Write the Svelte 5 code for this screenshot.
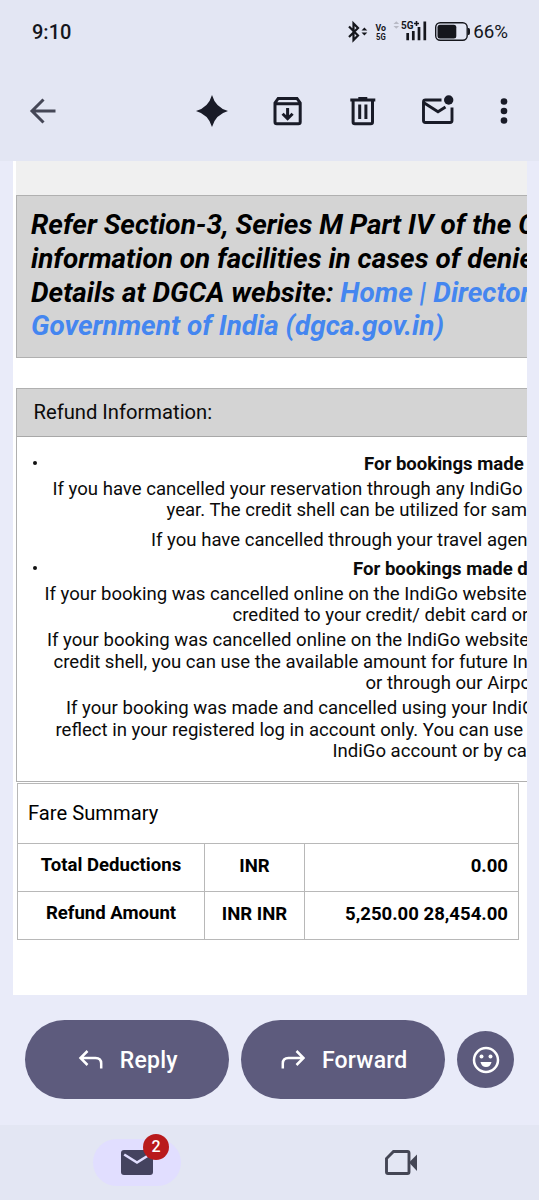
<script lang="ts">
  interface Line {
    text: string;
    indent: number;
  }

  interface Paragraph {
    lines: Line[];
    bullet?: boolean;
    spaced?: boolean;
  }

  const paragraphs: Paragraph[] = [
    { bullet: true, lines: [{ text: 'For bookings made', indent: 347 }] },
    {
      lines: [
        { text: 'If you have cancelled your reservation through any IndiGo', indent: 35.5 },
        { text: 'year. The credit shell can be utilized for sam', indent: 149.5 },
      ],
    },
    {
      spaced: true,
      lines: [{ text: 'If you have cancelled through your travel agen', indent: 134 }],
    },
    { bullet: true, lines: [{ text: 'For bookings made d', indent: 336 }] },
    {
      lines: [
        { text: 'If your booking was cancelled online on the IndiGo website', indent: 27.5 },
        { text: 'credited to your credit/ debit card or', indent: 215.5 },
      ],
    },
    {
      lines: [
        { text: 'If your booking was cancelled online on the IndiGo website', indent: 30 },
        { text: 'credit shell, you can use the available amount for future In', indent: 36.5 },
        { text: 'or through our Airpo', indent: 348.5 },
      ],
    },
    {
      lines: [
        { text: 'If your booking was made and cancelled using your IndiG', indent: 49 },
        { text: 'reflect in your registered log in account only. You can use', indent: 38.5 },
        { text: 'IndiGo account or by ca', indent: 315.5 },
      ],
    },
  ];

  const fares = [
    { label: 'Total Deductions', currency: 'INR', amount: '0.00' },
    { label: 'Refund Amount', currency: 'INR INR', amount: '5,250.00 28,454.00' },
  ];

  let unread = $state(2);
</script>

<div class="screen">
  <div class="status-bar">
    <span class="clock">9:10</span>
    <div class="indicators">
      <svg class="signals" width="126" height="24" viewBox="0 0 126 24">
        <path d="M5 6.5 14 15.500 9.500 20V3.500L14 8 5 17" fill="none" stroke="#15161c" stroke-width="2.2" />
        <path d="M17.500 10.500 20.400 7.500 23.300 10.500ZM17.500 12.500 20.400 15.500 23.300 12.500Z" fill="#15161c" />
        <text x="31.500" y="10.500" font-size="9.5" textLength="10.500" lengthAdjust="spacingAndGlyphs">Vo</text>
        <text x="32" y="20" font-size="9.5" textLength="9.700" lengthAdjust="spacingAndGlyphs">5G</text>
        <path d="M49.500 4 52.300 1.300 55.100 4ZM49.500 6 52.300 8.700 55.100 6Z" fill="#b7b9c4" />
        <text x="57" y="9" font-size="10" textLength="12.500" lengthAdjust="spacingAndGlyphs">5G</text>
        <path d="M72.500 1v5M70 3.500h5" stroke="#15161c" stroke-width="1.6" />
        <path d="M63.700 13v7.300M69.300 11v9.300M75 7v13.300M80.800 1.500v18.800" stroke="#15161c" stroke-width="2.7" />
        <rect x="91.700" y="2.800" width="31.500" height="17.500" rx="4.500" fill="none" stroke="#15161c" stroke-width="1.4" />
        <rect x="93.500" y="4.700" width="18.800" height="13.700" rx="2.500" fill="#15161c" />
        <path d="M124 8h.5q1.500 0 1.500 2v3q0 2-1.500 2h-.5Z" fill="#15161c" />
      </svg>
      <span class="battery">66%</span>
    </div>
  </div>

  <div class="toolbar">
    <button class="tool back" aria-label="Back">
      <svg width="40" height="40" viewBox="0 0 40 40">
        <path d="M32.500 20H9M20.500 8.500 9 20l11.500 11.500" fill="none" stroke="#454756" stroke-width="3" />
      </svg>
    </button>
    <div class="tools">
      <button class="tool" aria-label="Summarise">
        <svg width="40" height="40" viewBox="0 0 40 40">
          <path d="M20 4Q23.500 16.500 36 20 23.500 23.500 20 36 16.500 23.500 4 20 16.500 16.500 20 4Z" fill="#191b27" />
        </svg>
      </button>
      <button class="tool" aria-label="Archive">
        <svg width="40" height="40" viewBox="0 0 40 40">
          <path d="M7 12V31q0 1.800 1.800 1.800H30.400q1.800 0 1.800-1.800V12L29 7.500H10.200ZM7 12.800H32.200M19.600 17v10.500M14.600 22.700l5 5 5-5" fill="none" stroke="#191b27" stroke-width="3" />
        </svg>
      </button>
      <button class="tool" aria-label="Delete">
        <svg width="40" height="40" viewBox="0 0 40 40">
          <path d="M7.300 9H32.300M15.300 7.600h9M10.100 9V31q0 1.800 1.800 1.800H27.700q1.800 0 1.800-1.800V9M16.700 13.500v14.500M22.900 13.500v14.500" fill="none" stroke="#191b27" stroke-width="3" />
        </svg>
      </button>
      <button class="tool" aria-label="Mark as unread">
        <svg width="40" height="40" viewBox="0 0 40 40">
          <path d="M23.500 9H7.500Q5.500 9 5.500 11V29.500q0 2 2 2H32q2 0 2-2V16.500M5.500 11.500 20 20.700 27.500 16" fill="none" stroke="#191b27" stroke-width="2.9" />
          <circle cx="30.700" cy="9" r="4.700" fill="#191b27" />
        </svg>
      </button>
      <button class="tool more" aria-label="More options">
        <svg width="40" height="40" viewBox="0 0 40 40" fill="#191b27">
          <circle cx="20" cy="10.500" r="3.300" />
          <circle cx="20" cy="20" r="3.300" />
          <circle cx="20" cy="29.500" r="3.300" />
        </svg>
      </button>
    </div>
  </div>

  <main class="message">
    <div class="previous"></div>
    <section class="notice">
      Refer Section-3, Series M Part IV of the C<br />
      information on facilities in cases of denie<br />
      Details at DGCA website: <a href="#dgca">Home | Director<br />
      Government of India (dgca.gov.in)</a>
    </section>

    <section class="refund">
      <h2>Refund Information:</h2>
      <div class="terms">
        {#each paragraphs as paragraph}
          <div class="paragraph" class:bullet={paragraph.bullet} class:spaced={paragraph.spaced}>
            {#each paragraph.lines as line}
              <p style="padding-left: {line.indent}px">{line.text}</p>
            {/each}
          </div>
        {/each}
      </div>
    </section>

    <table class="fares">
      <colgroup>
        <col class="label-col" />
        <col class="currency-col" />
        <col />
      </colgroup>
      <tbody>
        <tr class="caption"><td colspan="3">Fare Summary</td></tr>
        {#each fares as fare}
          <tr>
            <th>{fare.label}</th>
            <td>{fare.currency}</td>
            <td class="amount">{fare.amount}</td>
          </tr>
        {/each}
      </tbody>
    </table>
  </main>

  <div class="actions">
    <button class="pill">
      <svg width="26" height="22" viewBox="0 0 26 22">
        <path d="M10.500 2 3.500 9l7 7M3.500 9H18.500q5.700 0 5.700 5.500V19.500" fill="none" stroke="#fff" stroke-width="2.5" />
      </svg>
      <span>Reply</span>
    </button>
    <button class="pill">
      <svg width="26" height="22" viewBox="0 0 26 22">
        <path d="M17.500 2l7 7-7 7M24.500 9H9.500q-5.700 0-5.700 5.500V19.500" fill="none" stroke="#fff" stroke-width="2.5" />
      </svg>
      <span>Forward</span>
    </button>
    <button class="emoji" aria-label="Add reaction">
      <svg width="28" height="28" viewBox="0 0 28 28">
        <circle cx="14" cy="14" r="12" fill="none" stroke="#fff" stroke-width="2.5" />
        <circle cx="9.500" cy="10.500" r="2" fill="#fff" />
        <circle cx="18.500" cy="10.500" r="2" fill="#fff" />
        <path d="M8.500 16H19.500Q18.500 21 14 21T8.500 16Z" fill="#fff" />
      </svg>
    </button>
  </div>

  <nav class="tabs">
    <button class="tab" aria-label="Mail">
      <span class="active">
        <svg width="32" height="26" viewBox="0 0 32 26">
          <rect width="32" height="25" rx="3" fill="#44435f" />
          <path d="M3.200 4.500 16 12.500 28.800 4.500" fill="none" stroke="#e1deff" stroke-width="2.6" />
        </svg>
        <span class="badge">{unread}</span>
      </span>
    </button>
    <button class="tab" aria-label="Meet">
      <svg width="34" height="26" viewBox="0 0 34 26">
        <path d="M9.500 1.500H23.500q1.500 0 1.500 1.500V22q0 1.500-1.500 1.500H4Q2.500 23.500 2.500 22V8.500Z" fill="none" stroke="#444654" stroke-width="2.9" />
        <path d="M25 12.500 33 4.500v16.500Z" fill="#444654" />
      </svg>
    </button>
  </nav>
</div>

<style>
  :global(body) {
    background: #e9ebf9;
  }

  .screen {
    display: flex;
    flex-direction: column;
    width: 539px;
    height: 1200px;
    overflow: hidden;
    background: #e9ebf9;
    font-family: Roboto, 'Liberation Sans', sans-serif;
    color: #0b0b0b;
  }

  button {
    padding: 0;
    border: 0;
    background: none;
    font: inherit;
    color: inherit;
  }

  svg {
    display: block;
  }

  .status-bar {
    flex: none;
    display: flex;
    justify-content: space-between;
    align-items: center;
    box-sizing: border-box;
    height: 62px;
    padding: 1px 31px 0 32px;
    background: #e3e6f3;
    color: #15161c;
  }

  .clock {
    font-size: 20px;
    font-weight: 500;
  }

  .indicators {
    display: flex;
    align-items: center;
    gap: 3px;
  }

  .signals text {
    font-weight: 700;
    fill: #15161c;
  }

  .battery {
    font-size: 18.8px;
  }

  .toolbar {
    flex: none;
    display: flex;
    justify-content: space-between;
    box-sizing: border-box;
    height: 99px;
    padding: 0 7px 0 15px;
    background: #e3e6f3;
  }

  .tools {
    display: flex;
  }

  .tool {
    display: flex;
    justify-content: center;
    align-items: center;
    width: 75.3px;
    height: 98px;
  }

  .tool.back,
  .tool.more {
    width: 56px;
  }

  .message {
    flex: none;
    box-sizing: border-box;
    width: 514px;
    height: 834px;
    margin-left: 12.5px;
    padding-left: 3.5px;
    overflow: hidden;
    background: #fff;
    white-space: nowrap;
  }

  .previous {
    height: 34px;
    background: #f0f0f0;
  }

  .notice {
    box-sizing: border-box;
    width: 900px;
    height: 163px;
    padding: 12px 14px;
    border: 1px solid #b0b0b0;
    background: #d4d4d4;
    font-size: 27.9px;
    font-style: italic;
    font-weight: 700;
    line-height: 33.8px;
    color: #000;
  }

  .notice a {
    color: #4486f0;
    text-decoration: none;
  }

  .refund {
    box-sizing: border-box;
    width: 900px;
    height: 394px;
    margin-top: 30px;
    border: 1px solid #b0b0b0;
  }

  .refund h2 {
    box-sizing: border-box;
    height: 48px;
    margin: 0;
    padding-left: 16.5px;
    border-bottom: 1px solid #a8a8a8;
    background: #d4d4d4;
    font-size: 20.2px;
    font-weight: 400;
    line-height: 46px;
  }

  .terms {
    padding-top: 17px;
    font-size: 18.57px;
    line-height: 21.7px;
  }

  .paragraph {
    margin-bottom: 3px;
  }

  .paragraph p {
    margin: 0;
  }

  .paragraph.bullet {
    position: relative;
    font-weight: 700;
  }

  .paragraph.bullet::before {
    content: '';
    position: absolute;
    top: 7px;
    left: 16px;
    width: 4px;
    height: 4px;
    border-radius: 50%;
    background: #111;
  }

  .paragraph.spaced {
    margin: 7.5px 0;
  }

  .fares {
    width: 502px;
    height: 157px;
    margin-top: 1px;
    margin-left: 1px;
    border-collapse: collapse;
    table-layout: fixed;
    font-size: 18.57px;
    font-weight: 700;
    color: #000;
  }

  .label-col {
    width: 187px;
  }

  .currency-col {
    width: 100px;
  }

  .fares td,
  .fares th {
    box-sizing: border-box;
    height: 48px;
    padding: 0 10px 3px;
    border: 1px solid #b8b8b8;
    text-align: center;
  }

  .fares th {
    padding-bottom: 5px;
  }

  .fares .amount {
    text-align: right;
  }

  .fares .caption td {
    height: 60px;
    padding-bottom: 2px;
    font-size: 20.2px;
    font-weight: 400;
    text-align: left;
  }

  .actions {
    flex: none;
    display: flex;
    align-items: center;
    gap: 12.5px;
    box-sizing: border-box;
    height: 130px;
    padding: 0 25px 1px;
  }

  .pill {
    display: flex;
    justify-content: center;
    align-items: center;
    gap: 17px;
    box-sizing: border-box;
    width: 203.5px;
    height: 79px;
    padding: 1px 0 0 1px;
    border-radius: 40px;
    background: #5d5b7d;
    color: #fff;
    font-size: 23px;
    font-weight: 500;
    letter-spacing: 0.2px;
  }

  .emoji {
    display: flex;
    justify-content: center;
    align-items: center;
    width: 57px;
    height: 57px;
    border-radius: 50%;
    background: #5d5b7d;
  }

  .tabs {
    flex: none;
    display: flex;
    height: 75px;
    background: #e3e6f3;
  }

  .tab {
    display: flex;
    justify-content: center;
    align-items: center;
    width: 264px;
  }

  .tab:first-child {
    width: 269px;
    padding-left: 5px;
  }

  .active {
    position: relative;
    display: flex;
    justify-content: center;
    align-items: center;
    width: 88px;
    height: 47px;
    border-radius: 24px;
    background: #e1deff;
  }

  .badge {
    position: absolute;
    top: -5px;
    right: 12px;
    width: 26px;
    height: 26px;
    border-radius: 50%;
    background: #b91a1c;
    color: #fff;
    font-size: 16px;
    font-weight: 500;
    line-height: 26px;
  }
</style>
